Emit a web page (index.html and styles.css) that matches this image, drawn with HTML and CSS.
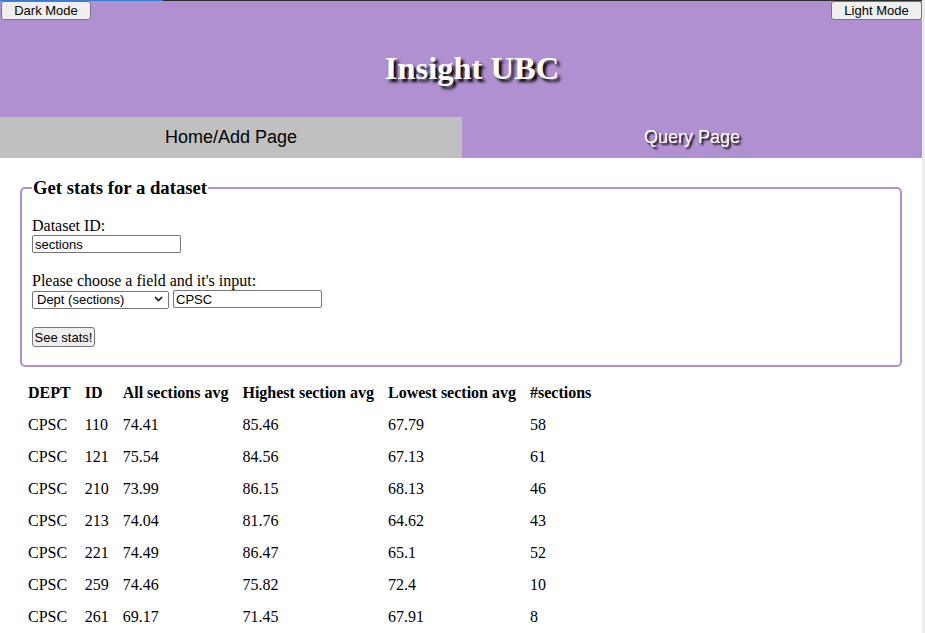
FILE: index.html
```html
<!DOCTYPE html>
<html lang="en">
<head>
<meta charset="utf-8">
<title>Insight UBC</title>
<link rel="stylesheet" href="styles.css">
</head>
<body>
<div class="topline"></div>
<header class="header">
  <div class="modes">
    <button class="btn">Dark Mode</button>
    <button class="btn">Light Mode</button>
  </div>
  <h1 class="title">Insight UBC</h1>
</header>
<nav class="tabs">
  <div class="tab tab-home">Home/Add Page</div>
  <div class="tab tab-query">Query Page</div>
</nav>
<main class="main">
  <fieldset class="box">
    <legend class="legend">Get stats for a dataset</legend>
    <div class="group">
      <label class="label">Dataset ID:</label>
      <input class="field field-id" type="text" value="sections">
    </div>
    <div class="group">
      <label class="label">Please choose a field and it's input:</label>
      <div class="inline">
        <div class="select-wrap">
          <select class="select"><option>Dept (sections)</option></select>
          <svg class="chev" width="9" height="6" viewBox="0 0 9 6"><path d="M1 1 L4.5 4.5 L8 1" fill="none" stroke="#111" stroke-width="1.6"/></svg>
        </div>
        <input class="field field-val" type="text" value="CPSC">
      </div>
    </div>
    <div class="group">
      <button class="btn btn-stats">See stats!</button>
    </div>
  </fieldset>
  <table class="stats">
    <thead>
      <tr><th>DEPT</th><th>ID</th><th>All sections avg</th><th>Highest section avg</th><th>Lowest section avg</th><th>#sections</th></tr>
    </thead>
    <tbody>
      <tr><td>CPSC</td><td>110</td><td>74.41</td><td>85.46</td><td>67.79</td><td>58</td></tr>
      <tr><td>CPSC</td><td>121</td><td>75.54</td><td>84.56</td><td>67.13</td><td>61</td></tr>
      <tr><td>CPSC</td><td>210</td><td>73.99</td><td>86.15</td><td>68.13</td><td>46</td></tr>
      <tr><td>CPSC</td><td>213</td><td>74.04</td><td>81.76</td><td>64.62</td><td>43</td></tr>
      <tr><td>CPSC</td><td>221</td><td>74.49</td><td>86.47</td><td>65.1</td><td>52</td></tr>
      <tr><td>CPSC</td><td>259</td><td>74.46</td><td>75.82</td><td>72.4</td><td>10</td></tr>
      <tr><td>CPSC</td><td>261</td><td>69.17</td><td>71.45</td><td>67.91</td><td>8</td></tr>
    </tbody>
  </table>
</main>
</body>
</html>
```
FILE: styles.css
```css
html, body {
  margin: 0;
  padding: 0;
  background: #fff;
}
body {
  font-family: "Liberation Serif", "Times New Roman", serif;
  font-size: 16px;
  line-height: 18px;
  color: #000;
  border-right: 3px solid #ececec;
  overflow: hidden;
}
.topline {
  height: 1px;
  background: linear-gradient(to right, #3a7bd5 0, #3a7bd5 163px, #2b2b2b 163px);
}
.header {
  background: #b090d0;
  height: 116px;
}
.modes {
  display: flex;
  justify-content: space-between;
  padding: 0 0 0 1px;
}
.btn {
  font-family: "Liberation Sans", Arial, sans-serif;
  font-size: 13px;
  line-height: 15px;
  height: 19px;
  padding: 0 6px;
  background: #efefef;
  color: #000;
  border: 1px solid #767676;
  border-radius: 3px;
  white-space: nowrap;
}
.modes .btn:first-child { width: 90px; }
.modes .btn:last-child { width: 91px; }
.title {
  margin: 30px 0 0;
  padding-left: 22px;
  text-align: center;
  font-size: 32.5px;
  line-height: 37px;
  font-weight: bold;
  color: #fff;
  text-shadow: 3px 3px 3px #000;
}
.tabs {
  display: flex;
  height: 41px;
}
.tab {
  flex: 1;
  display: flex;
  align-items: center;
  justify-content: center;
  font-family: "Liberation Sans", Arial, sans-serif;
  font-size: 18px;
  padding-bottom: 1px;
}
.tab-home {
  background: #c0c0c0;
  color: #000;
  flex: 0 0 462px;
}
.tab-query {
  background: #b090d0;
  color: #fff;
  text-shadow: 2px 2px 2px #000;
}
.main {
  padding: 0;
}
.box {
  margin: 19px 20px 0;
  padding: 18px 10px 18px;
  border: 2px solid #b090d0;
  border-radius: 5px;
  min-width: 0;
}
.legend {
  padding: 0 1px;
  font-size: 18.7px;
  line-height: 22px;
  font-weight: bold;
}
.group {
  margin-bottom: 19px;
}
.group:last-child {
  margin-bottom: 0;
}
.label {
  display: block;
}
.field {
  box-sizing: border-box;
  height: 18px;
  padding: 0 2px;
  border: 1px solid #767676;
  border-radius: 2px;
  font-family: "Liberation Sans", Arial, sans-serif;
  font-size: 13px;
  color: #000;
  background: #fff;
  display: block;
}
.field-id { width: 149px; }
.field-val { width: 149px; }
.inline {
  display: flex;
  gap: 4px;
}
.select-wrap {
  position: relative;
  width: 137px;
  height: 18px;
}
.select {
  appearance: none;
  -webkit-appearance: none;
  box-sizing: border-box;
  width: 137px;
  height: 18px;
  padding: 0 0 0 4px;
  border: 1px solid #767676;
  border-radius: 2px;
  background: #fff;
  font-family: "Liberation Sans", Arial, sans-serif;
  font-size: 13px;
  color: #000;
}
.chev {
  position: absolute;
  right: 6px;
  top: 6px;
}
.btn-stats {
  padding: 0 1px;
  width: 63px;
  height: 20px;
}
.stats {
  margin: 9px 0 0 20px;
  border-spacing: 2px;
}
.stats th, .stats td {
  padding: 6px;
  text-align: left;
  line-height: 18px;
}
.stats th {
  font-weight: bold;
}
```
